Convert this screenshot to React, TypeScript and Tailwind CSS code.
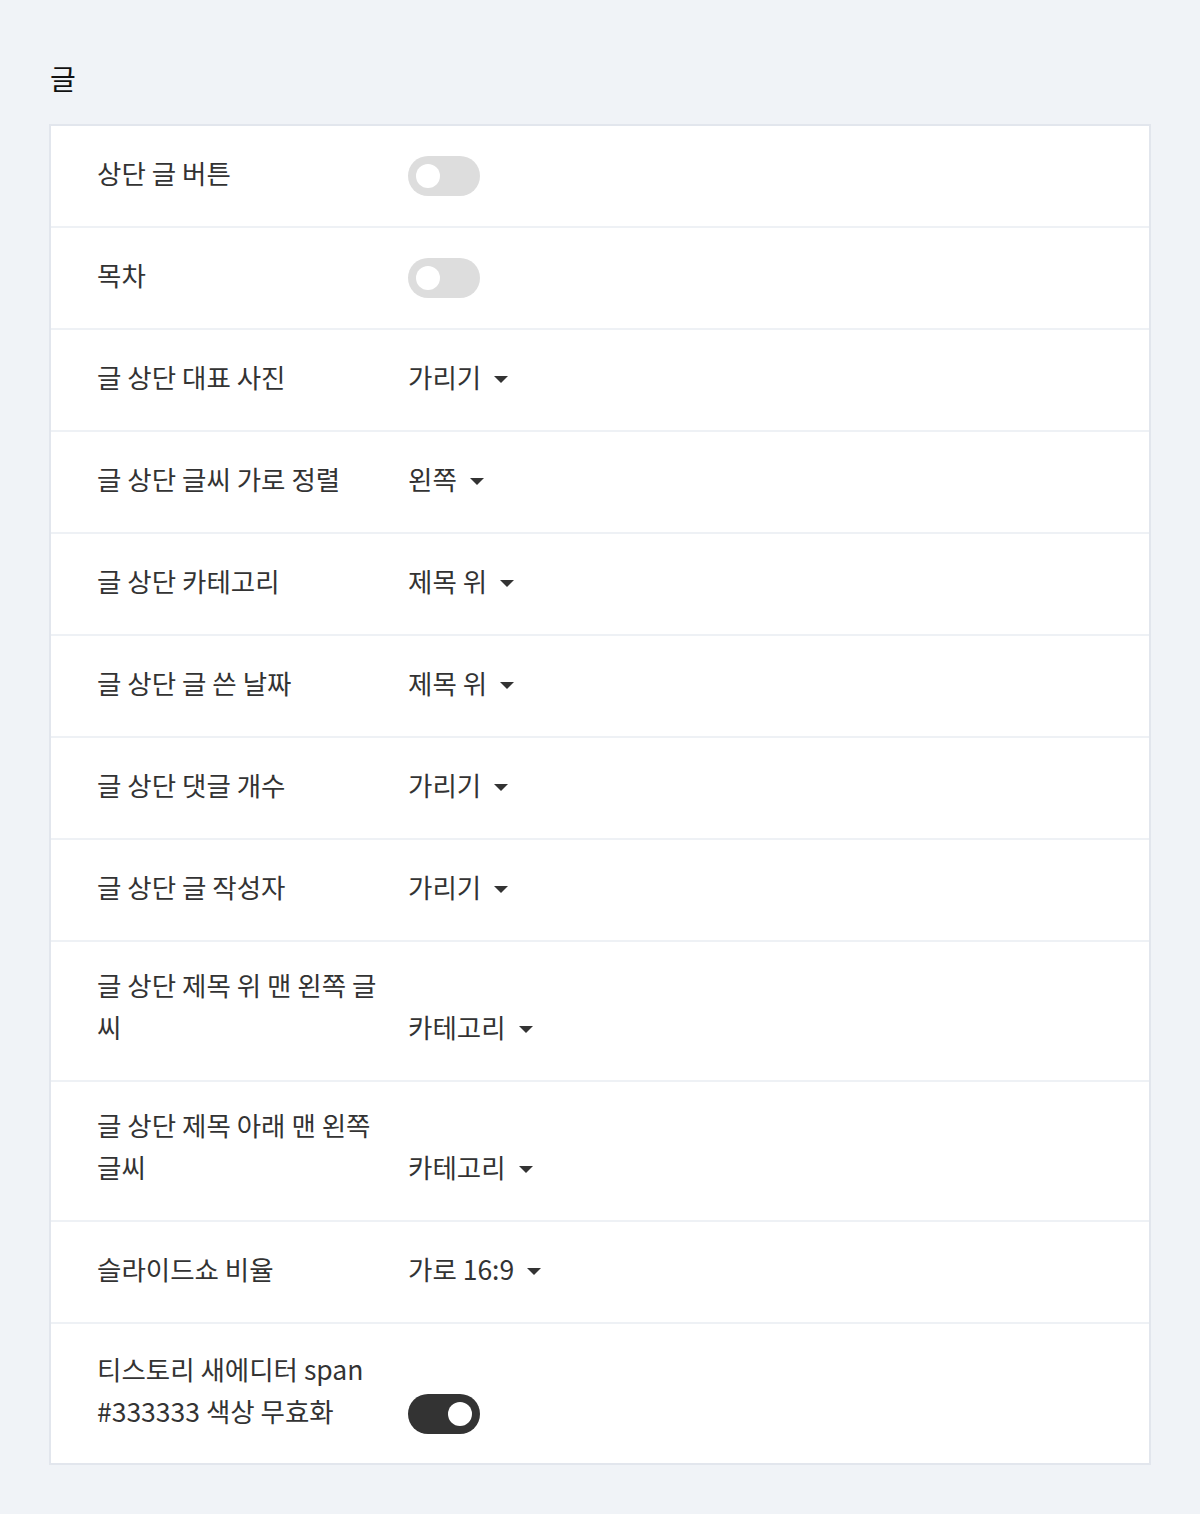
import React from "react";

type Row =
  | { label: string; kind: "toggle"; on: boolean }
  | { label: string; kind: "select"; value: string };

const rows: Row[] = [
  { label: "상단 글 버튼", kind: "toggle", on: false },
  { label: "목차", kind: "toggle", on: false },
  { label: "글 상단 대표 사진", kind: "select", value: "가리기" },
  { label: "글 상단 글씨 가로 정렬", kind: "select", value: "왼쪽" },
  { label: "글 상단 카테고리", kind: "select", value: "제목 위" },
  { label: "글 상단 글 쓴 날짜", kind: "select", value: "제목 위" },
  { label: "글 상단 댓글 개수", kind: "select", value: "가리기" },
  { label: "글 상단 글 작성자", kind: "select", value: "가리기" },
  { label: "글 상단 제목 위 맨 왼쪽 글씨", kind: "select", value: "카테고리" },
  { label: "글 상단 제목 아래 맨 왼쪽 글씨", kind: "select", value: "카테고리" },
  { label: "슬라이드쇼 비율", kind: "select", value: "가로 16:9" },
  { label: "티스토리 새에디터 span #333333 색상 무효화", kind: "toggle", on: true },
];

function Toggle({ on }: { on: boolean }) {
  return (
    <div className="h-[46px] flex items-center">
      <div
        className={
          on
            ? "w-[72px] h-[40px] rounded-full bg-[#333333] flex items-center justify-end px-[8px]"
            : "w-[72px] h-[40px] rounded-full bg-[#dddddd] flex items-center justify-start px-[8px]"
        }
      >
        <div className="w-[24px] h-[24px] rounded-full bg-white" />
      </div>
    </div>
  );
}

function Select({ value }: { value: string }) {
  return (
    <div className="h-[46px] flex items-end">
      <div className="flex items-center gap-[13px] leading-[42px] text-[#333333] -translate-y-[5px]">
        <span>{value}</span>
        <span className="w-0 h-0 border-l-[7px] border-r-[7px] border-t-[7px] border-l-transparent border-r-transparent border-t-[#333333] translate-y-[2px]" />
      </div>
    </div>
  );
}

export default function App() {
  return (
    <div
      className="min-h-[1514px] bg-[#f0f3f7] px-[49px] pt-[54px] pb-[48px]"
      style={{ fontFamily: '"Noto Sans CJK KR", "Noto Sans", sans-serif' }}
    >
      <h1 className="text-[28px] leading-[48px] text-[#111111] font-normal pl-[1px] mb-[22px]">글</h1>
      <div className="bg-white border-2 border-[#e2e6ed]">
        {rows.map((r, i) => (
          <div
            key={i}
            className={
              i < rows.length - 1
                ? "flex items-end pl-[46px] py-[27px] border-b-2 border-[#eef1f5] text-[26.5px]"
                : "flex items-end pl-[46px] pt-[29px] pb-[26px] text-[26.5px]"
            }
          >
            <div className="w-[311px] pr-[21px] leading-[42px] text-[#333333] shrink-0">
              <div className="-translate-y-[5px]">{r.label}</div>
            </div>
            <div>
              {r.kind === "toggle" ? <Toggle on={r.on} /> : <Select value={r.value} />}
            </div>
          </div>
        ))}
      </div>
    </div>
  );
}
